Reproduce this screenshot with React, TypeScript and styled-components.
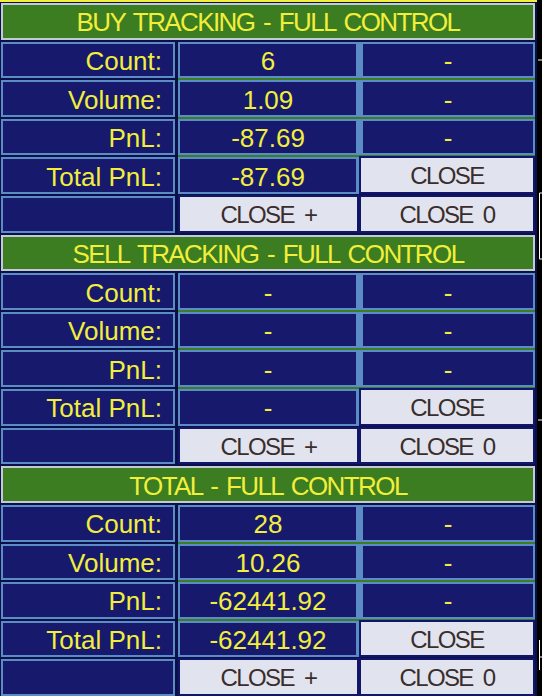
import React from "react";
import styled, { createGlobalStyle, css } from "styled-components";

const GlobalStyle = createGlobalStyle`
    html, body {
        margin: 0;
        padding: 0;
        background: #000;
    }
`;

const YELLOW = "#f2ee3c";
const NAVY = "#17196c";
const DARK = "#0b1048";
const EDGE = "#5b8cc6";
const GREEN = "#3b7d20";

type Section = {
    title: string;
    count: string;
    volume: string;
    pnl: string;
    total: string;
};

const sections: Section[] = [
    { title: "BUY TRACKING - FULL CONTROL", count: "6", volume: "1.09", pnl: "-87.69", total: "-87.69" },
    { title: "SELL TRACKING - FULL CONTROL", count: "-", volume: "-", pnl: "-", total: "-" },
    { title: "TOTAL - FULL CONTROL", count: "28", volume: "10.26", pnl: "-62441.92", total: "-62441.92" },
];

const App = () => {
    return (
        <>
            <GlobalStyle />
            <Page>
                <Panel>
                    {sections.map(s => (
                        <React.Fragment key={s.title}>
                            <Header>{s.title}</Header>

                            <Label>Count:</Label>
                            <Value>{s.count}</Value>
                            <Value last>-</Value>

                            <Label>Volume:</Label>
                            <Value>{s.volume}</Value>
                            <Value last>-</Value>

                            <Label>PnL:</Label>
                            <Value>{s.pnl}</Value>
                            <Value last>-</Value>

                            <Label>Total PnL:</Label>
                            <Value plain>{s.total}</Value>
                            <Button>CLOSE</Button>

                            <Label />
                            <Button>CLOSE +</Button>
                            <Button>CLOSE 0</Button>
                        </React.Fragment>
                    ))}
                </Panel>
                <ChartEdge width="5" height="696" viewBox="0 0 5 696">
                    <path d="M1 60h4" stroke="#fff" strokeWidth="1" />
                    <path d="M2.5 193v66M2.5 193h3M2.5 259h3" stroke="#fff" strokeWidth="1" fill="none" />
                    <path d="M1 420h4" stroke="#fff" strokeWidth="1" />
                    <path d="M2.5 640v30M2.5 657h3" stroke="#fff" strokeWidth="1" fill="none" />
                </ChartEdge>
            </Page>
        </>
    );
};

export default App;

const Page = styled.div`
    display: flex;
    width: 542px;
    height: 696px;
    overflow: hidden;
`;

const Panel = styled.div`
    box-sizing: border-box;
    width: 537px;
    height: 696px;
    flex-shrink: 0;
    display: grid;
    grid-template-columns: 177px 181px 176px;
    grid-template-rows: repeat(18, 1fr);
    row-gap: 2px;
    padding: 1px 2px 0 1px;
    border-top: 2px solid ${YELLOW};
    background: ${DARK};
    font-family: "Liberation Sans", Arial, sans-serif;
    font-size: 26px;
    color: ${YELLOW};
`;

const Header = styled.div`
    grid-column: 1 / -1;
    display: flex;
    align-items: center;
    justify-content: center;
    padding-top: 2px;
    background: ${GREEN};
    border: 2px solid #c3cad6;
    box-shadow: 0 0 0 1px ${DARK};
    font-size: 26px;
    letter-spacing: -1.6px;
    word-spacing: 3px;
    line-height: 1;
    white-space: nowrap;
`;

const cellBase = css`
    box-sizing: border-box;
    display: flex;
    align-items: center;
    min-height: 0;
    padding-top: 2px;
    line-height: 1;
    white-space: nowrap;
`;

const Label = styled.div`
    ${cellBase};
    justify-content: flex-end;
    margin-right: 3px;
    padding-right: 11px;
    background: ${NAVY};
    border: 2px solid ${EDGE};
`;

const Value = styled.div<{ last?: boolean; plain?: boolean }>`
    ${cellBase};
    justify-content: center;
    background: ${NAVY};
    border: 2px solid ${EDGE};
    border-right-width: 3px;
    box-shadow: 0 2px 0 ${GREEN};
    ${props =>
        props.last &&
        css`
            border-left-width: 4px;
            border-right-width: 2px;
        `}
    ${props =>
        props.plain &&
        css`
            box-shadow: 0 2px 0 ${DARK};
        `}
`;

const Button = styled.div`
    ${cellBase};
    justify-content: center;
    background: #e1e4ee;
    border: 2px solid #12166a;
    margin-top: -1px;
    color: #3a2d2d;
    font-size: 24px;
    letter-spacing: -1.6px;
    word-spacing: 5px;
    cursor: pointer;
`;

const ChartEdge = styled.svg`
    display: block;
    flex-shrink: 0;
`;
